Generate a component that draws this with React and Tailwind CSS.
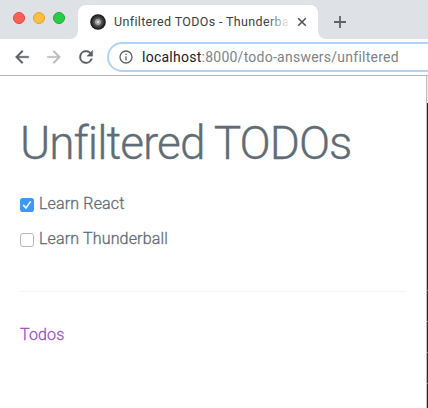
const WindowDot = ({ className }) => (
  <span className={`h-3 w-3 rounded-full border ${className}`} />
);

function TabStrip() {
  return (
    <div className="flex h-[39px] bg-[#dee1e6]">
      <div className="flex gap-2 pt-3 pl-[13px]">
        <WindowDot className="border-[#e2463f] bg-[#ff5f57]" />
        <WindowDot className="border-[#e1a12f] bg-[#ffbd3e]" />
        <WindowDot className="border-[#1cac2f] bg-[#2bca49]" />
      </div>
      <svg className="ml-[5px] h-[39px] w-2 shrink-0" viewBox="0 0 8 39">
        <path d="M0 39A8 8 0 0 0 8 31V39Z" fill="#fff" />
      </svg>
      <div className="mt-[5px] flex h-[34px] w-[240px] shrink-0 items-center rounded-t-lg bg-white pl-3">
        <svg className="h-4 w-4 shrink-0" viewBox="0 0 16 16">
          <defs>
            <radialGradient id="disc">
              <stop offset="0" stopColor="#ddd" />
              <stop offset="0.2" stopColor="#999" />
              <stop offset="0.45" stopColor="#5c5c5c" />
              <stop offset="0.75" stopColor="#303030" />
              <stop offset="1" stopColor="#111" />
            </radialGradient>
          </defs>
          <circle cx="8" cy="8" r="7.8" fill="url(#disc)" />
          <circle cx="8" cy="8" r="2.4" fill="none" stroke="#bbb" strokeWidth="0.8" />
          <circle cx="8" cy="8" r="0.8" fill="#fff" />
        </svg>
        <div className="relative ml-2 w-[176px] overflow-hidden text-[12.5px] leading-4 tracking-[0.35px] whitespace-nowrap text-[#3c4043]">
          Unfiltered TODOs - Thunderball
          <span className="absolute top-0 right-0 h-4 w-6 bg-linear-to-r from-white/0 to-white" />
        </div>
        <svg className="ml-[7px] h-[10px] w-[10px] shrink-0" viewBox="0 0 10 10">
          <path d="M1.2 1.2L8.8 8.8M8.8 1.2L1.2 8.8" stroke="#4c5054" strokeWidth="1.5" />
        </svg>
      </div>
      <svg className="h-[39px] w-2 shrink-0" viewBox="0 0 8 39">
        <path d="M8 39A8 8 0 0 1 0 31V39Z" fill="#fff" />
      </svg>
      <svg className="mt-4 ml-2 h-3 w-3 shrink-0" viewBox="0 0 12 12">
        <path d="M6 0V12M0 6H12" stroke="#5f6368" strokeWidth="1.8" />
      </svg>
    </div>
  );
}

function Toolbar() {
  return (
    <div className="flex h-[37px] items-start overflow-hidden border-b border-[#b4b4b6] bg-white">
      <svg className="mt-[8px] ml-3 h-5 w-5 shrink-0" viewBox="0 0 24 24" fill="#5a5e62" stroke="#5a5e62" strokeWidth="0.4">
        <path d="M20 11H7.83l5.59-5.59L12 4l-8 8 8 8 1.41-1.41L7.83 13H20v-2z" />
      </svg>
      <svg className="mt-[8px] ml-3 h-5 w-5 shrink-0" viewBox="0 0 24 24" fill="#babcbe" stroke="#babcbe" strokeWidth="0.4">
        <path d="M12 4l-1.41 1.41L16.17 11H4v2h12.17l-5.58 5.59L12 20l8-8z" />
      </svg>
      <svg className="mt-[8px] ml-3 h-5 w-5 shrink-0" viewBox="0 0 24 24" fill="#5a5e62" stroke="#5a5e62" strokeWidth="0.4">
        <path d="M17.65 6.35A7.96 7.96 0 0 0 12 4a8 8 0 1 0 7.73 10h-2.08A6 6 0 1 1 12 6c1.66 0 3.14.69 4.22 1.78L13 11h7V4l-2.35 2.35z" />
      </svg>
      <div className="mt-[3px] ml-[11px] flex h-[30px] w-[360px] shrink-0 items-center rounded-full border-2 border-[#afd3fc] pl-[9px]">
        <svg className="h-4 w-4 shrink-0" viewBox="0 0 24 24" fill="#5f6368">
          <path d="M11 17h2v-6h-2v6zm1-15a10 10 0 1 0 0 20 10 10 0 0 0 0-20zm0 18a8 8 0 1 1 0-16 8 8 0 0 1 0 16zM11 9h2V7h-2v2z" />
        </svg>
        <span className="ml-2 text-[14px] leading-5 tracking-[0.25px] whitespace-nowrap text-[#7e8387]">
          <span className="text-[#202124]">localhost</span>:8000/todo-answers/unfiltered
        </span>
      </div>
    </div>
  );
}

function Todo({ label, done }) {
  return (
    <label className="flex h-[35px] items-start">
      {done ? (
        <svg className="mt-[7px] h-[14px] w-[14px]" viewBox="0 0 14 14">
          <rect width="14" height="14" rx="2.8" fill="#3b99fc" />
          <path d="M3.6 7.4L6 10L10.3 3.9" fill="none" stroke="#fff" strokeWidth="1.6" strokeLinecap="round" />
        </svg>
      ) : (
        <span className="mt-[7px] h-[14px] w-[14px] rounded-[3px] border border-[#b5b5b5] bg-white" />
      )}
      <span className="ml-[5px] leading-[26px]">{label}</span>
    </label>
  );
}

const ticks = [290, 321, 352, 383];

export default function App() {
  return (
    <div className="flex h-[408px] w-[428px] flex-col overflow-hidden bg-white font-[Roboto,sans-serif]">
      <TabStrip />
      <Toolbar />
      <div className="relative flex flex-1">
        <main className="w-[426px] px-5 text-[16px] font-light tracking-[0.16px] text-[#606c76] [-webkit-text-stroke:0.3px]">
          <h1 className="mt-[40px] text-[46px] leading-[55px] font-light tracking-[-1px] whitespace-nowrap">
            Unfiltered TODOs
          </h1>
          <div className="mt-5">
            <Todo label="Learn React" done />
            <Todo label="Learn Thunderball" />
          </div>
          <hr className="mt-[30px] w-[386px] border-[#f4f5f6]" />
          <a className="mt-[30px] block leading-[26px] text-[#9b4dca]">Todos</a>
        </main>
        <div className="w-px bg-[#c0c0c2]" />
        <div className="w-px bg-[#28272c]">
          <div className="h-[27px] bg-[#e8e8e8]" />
        </div>
        {ticks.map((y) => (
          <span key={y} className="absolute right-0 h-px w-px bg-[#808084]" style={{ top: y - 76 }} />
        ))}
      </div>
    </div>
  );
}
